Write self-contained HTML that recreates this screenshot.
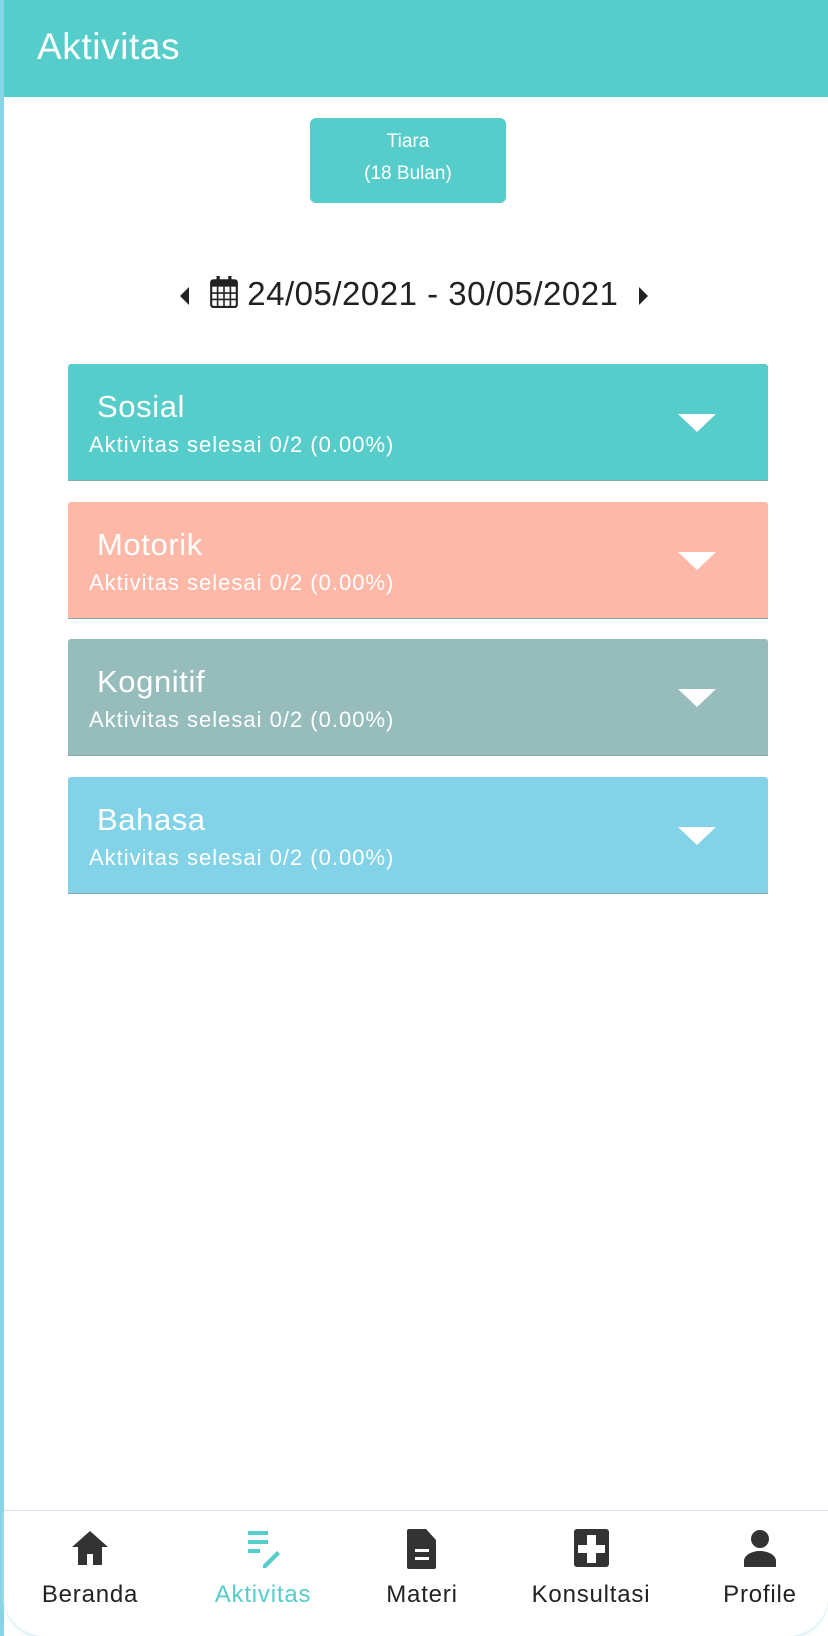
<!DOCTYPE html>
<html><head><meta charset="utf-8"><style>
*{margin:0;padding:0;box-sizing:border-box}
body{width:828px;height:1636px;background:#fff;position:relative;overflow:hidden;font-family:"Liberation Sans",sans-serif}
.stripe{position:absolute;left:0;top:0;width:4px;height:1636px;background:#86d4e6}
.hdr{position:absolute;left:4px;top:0;width:824px;height:97px;background:#56cdca}
.hdr span{position:absolute;left:33px;top:26px;color:#fff;font-size:37px;letter-spacing:0.6px}
.btn{position:absolute;left:310px;top:118px;width:196px;height:85px;background:#56cdca;border-radius:6px;color:#fff;text-align:center;font-size:19px;line-height:32px;padding-top:8px}
.date{position:absolute;left:0;top:275px;width:828px;text-align:center;font-size:33px;color:#222;letter-spacing:0.5px}
.card{position:absolute;left:68px;width:700px;height:117px;border-radius:3px 3px 0 0;border-bottom:1px solid #8aa;color:#fff}
.card .t{position:absolute;left:29px;top:25px;font-size:31px;letter-spacing:0.6px}
.card .s{position:absolute;left:21px;top:68px;font-size:22px;letter-spacing:1px}
.card .a{position:absolute;left:610px;top:50px;width:0;height:0;border-left:19px solid transparent;border-right:19px solid transparent;border-top:18px solid #fff}
.nav{position:absolute;left:4px;top:1510px;width:824px;height:126px;border-top:1px solid #dde;border-radius:0 0 40px 40px;box-shadow:0 2px 3px #cfeef5}
.it{position:absolute;top:1525px;width:160px;text-align:center;font-size:24px;color:#222;letter-spacing:0.8px}
.it svg{display:block;margin:0 auto 6px}
</style></head><body>
<div class="stripe"></div>
<div class="hdr"><span>Aktivitas</span></div>
<div class="btn">Tiara<br>(18 Bulan)</div>
<div class="date"><svg width="10" height="18" viewBox="0 0 10 18" style="vertical-align:0"><path d="M9 0L0 9l9 9z" fill="#222"/></svg> &nbsp;<svg width="28" height="32" viewBox="0 0 26 30" style="vertical-align:-3px"><rect x="1" y="4" width="24" height="25" rx="2" fill="none" stroke="#222" stroke-width="2"/><rect x="1" y="4" width="24" height="6" fill="#222"/><rect x="6" y="0" width="3" height="7" fill="#222"/><rect x="17" y="0" width="3" height="7" fill="#222"/><path d="M1 16h24M1 22h24M7 10v19M13 10v19M19 10v19" stroke="#222" stroke-width="1.5"/></svg> 24/05/2021 - 30/05/2021 &nbsp;<svg width="10" height="18" viewBox="0 0 10 18" style="vertical-align:0"><path d="M1 0l9 9-9 9z" fill="#222"/></svg></div>
<div class="card" style="top:364px;background:#56cdca"><div class="t">Sosial</div><div class="s">Aktivitas selesai 0/2 (0.00%)</div><div class="a"></div></div>
<div class="card" style="top:502px;background:#fdb8a8"><div class="t">Motorik</div><div class="s">Aktivitas selesai 0/2 (0.00%)</div><div class="a"></div></div>
<div class="card" style="top:639px;background:#97bcbc"><div class="t">Kognitif</div><div class="s">Aktivitas selesai 0/2 (0.00%)</div><div class="a"></div></div>
<div class="card" style="top:777px;background:#82d2e8"><div class="t">Bahasa</div><div class="s">Aktivitas selesai 0/2 (0.00%)</div><div class="a"></div></div>
<div class="nav"></div>
<div class="it" style="left:10px"><svg width="40" height="50" viewBox="0 0 40 50"><path d="M20 6L2 22h6v18h9V29h6v11h9V22h6z" fill="#333"/></svg>Beranda</div>
<div class="it" style="left:183px;color:#56cdca"><svg width="40" height="50" viewBox="0 0 40 50"><path d="M5 6h20v4H5zM5 15h20v4H5zM5 24h12v4H5z" fill="#56cdca"/><path d="M20 40l14-14 3 3-14 14h-3z" fill="#56cdca"/></svg>Aktivitas</div>
<div class="it" style="left:342px"><svg width="40" height="50" viewBox="0 0 40 50"><path d="M7 4h17l10 11v27a2 2 0 0 1-2 2H7a2 2 0 0 1-2-2V6a2 2 0 0 1 2-2z" fill="#333"/><rect x="13" y="24" width="14" height="3" fill="#fff"/><rect x="13" y="32" width="14" height="3" fill="#fff"/></svg>Materi</div>
<div class="it" style="left:511px"><svg width="40" height="50" viewBox="0 0 40 50"><rect x="3" y="4" width="35" height="38" rx="3" fill="#333"/><path d="M16 10h9v10h9v8h-9v10h-9V28H7v-8h9z" fill="#fff"/></svg>Konsultasi</div>
<div class="it" style="left:680px"><svg width="40" height="50" viewBox="0 0 40 50"><circle cx="20" cy="14" r="9" fill="#333"/><path d="M4 42v-6c0-6 8-10 16-10s16 4 16 10v6z" fill="#333"/></svg>Profile</div>
</body></html>
